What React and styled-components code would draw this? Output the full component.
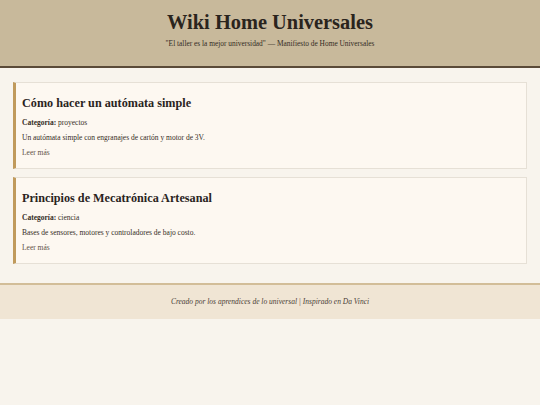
import React from "react";
import styled, { createGlobalStyle } from "styled-components";

const Global = createGlobalStyle`
  html, body { margin: 0; padding: 0; background: #f8f4ed; }
  body { font-family: "Liberation Serif", "Times New Roman", serif; color: #2b2520; }
`;

const Header = styled.header`
  background: #c8b99b;
  border-bottom: 2px solid #5a4a38;
  height: 56px;
  padding-top: 10px;
  display: flex;
  flex-direction: column;
  align-items: center;
  gap: 6px;
`;

const Title = styled.h1`
  margin: 0;
  font-size: 20.4px;
  line-height: 24px;
  font-weight: bold;
  color: #2a241d;
`;

const Tagline = styled.p`
  margin: 0;
  font-size: 7.4px;
  line-height: 8px;
  color: #352d25;
`;

const Main = styled.main`
  padding: 14px 13px 19px;
  display: flex;
  flex-direction: column;
  gap: 8px;
`;

const Card = styled.article`
  background: #fdf8f1;
  border: 1px solid #e6e0d6;
  border-left: 3px solid #c09a5c;
  padding: 13px 6px 11px;
  display: flex;
  flex-direction: column;
  align-items: flex-start;
  gap: 7px;
`;

const CardTitle = styled.h2`
  margin: 0 0 2px;
  font-size: 12.2px;
  line-height: 14px;
  font-weight: bold;
  color: #2a241d;
`;

const Line = styled.p`
  margin: 0;
  font-size: 7.5px;
  line-height: 8px;
  color: #352d25;
`;

const Link = styled.a`
  display: block;
  font-size: 7.5px;
  line-height: 8px;
  color: #5e5246;
  text-decoration: none;
`;

const Footer = styled.footer`
  background: #f0e5d4;
  border-top: 2px solid #d2bd98;
  height: 34px;
  display: flex;
  align-items: center;
  justify-content: center;
`;

const FootText = styled.p`
  margin: 0;
  font-size: 7.5px;
  line-height: 8px;
  font-style: italic;
  color: #4a4036;
`;

const posts = [
  {
    title: "Cómo hacer un autómata simple",
    cat: "proyectos",
    desc: "Un autómata simple con engranajes de cartón y motor de 3V.",
  },
  {
    title: "Principios de Mecatrónica Artesanal",
    cat: "ciencia",
    desc: "Bases de sensores, motores y controladores de bajo costo.",
  },
];

export default function App() {
  return (
    <>
      <Global />
      <Header>
        <Title>Wiki Home Universales</Title>
        <Tagline>"El taller es la mejor universidad" — Manifiesto de Home Universales</Tagline>
      </Header>
      <Main>
        {posts.map((p) => (
          <Card key={p.title}>
            <CardTitle>{p.title}</CardTitle>
            <Line>
              <strong>Categoría:</strong> {p.cat}
            </Line>
            <Line>{p.desc}</Line>
            <Link href="#">Leer más</Link>
          </Card>
        ))}
      </Main>
      <Footer>
        <FootText>Creado por los aprendices de lo universal | Inspirado en Da Vinci</FootText>
      </Footer>
    </>
  );
}
